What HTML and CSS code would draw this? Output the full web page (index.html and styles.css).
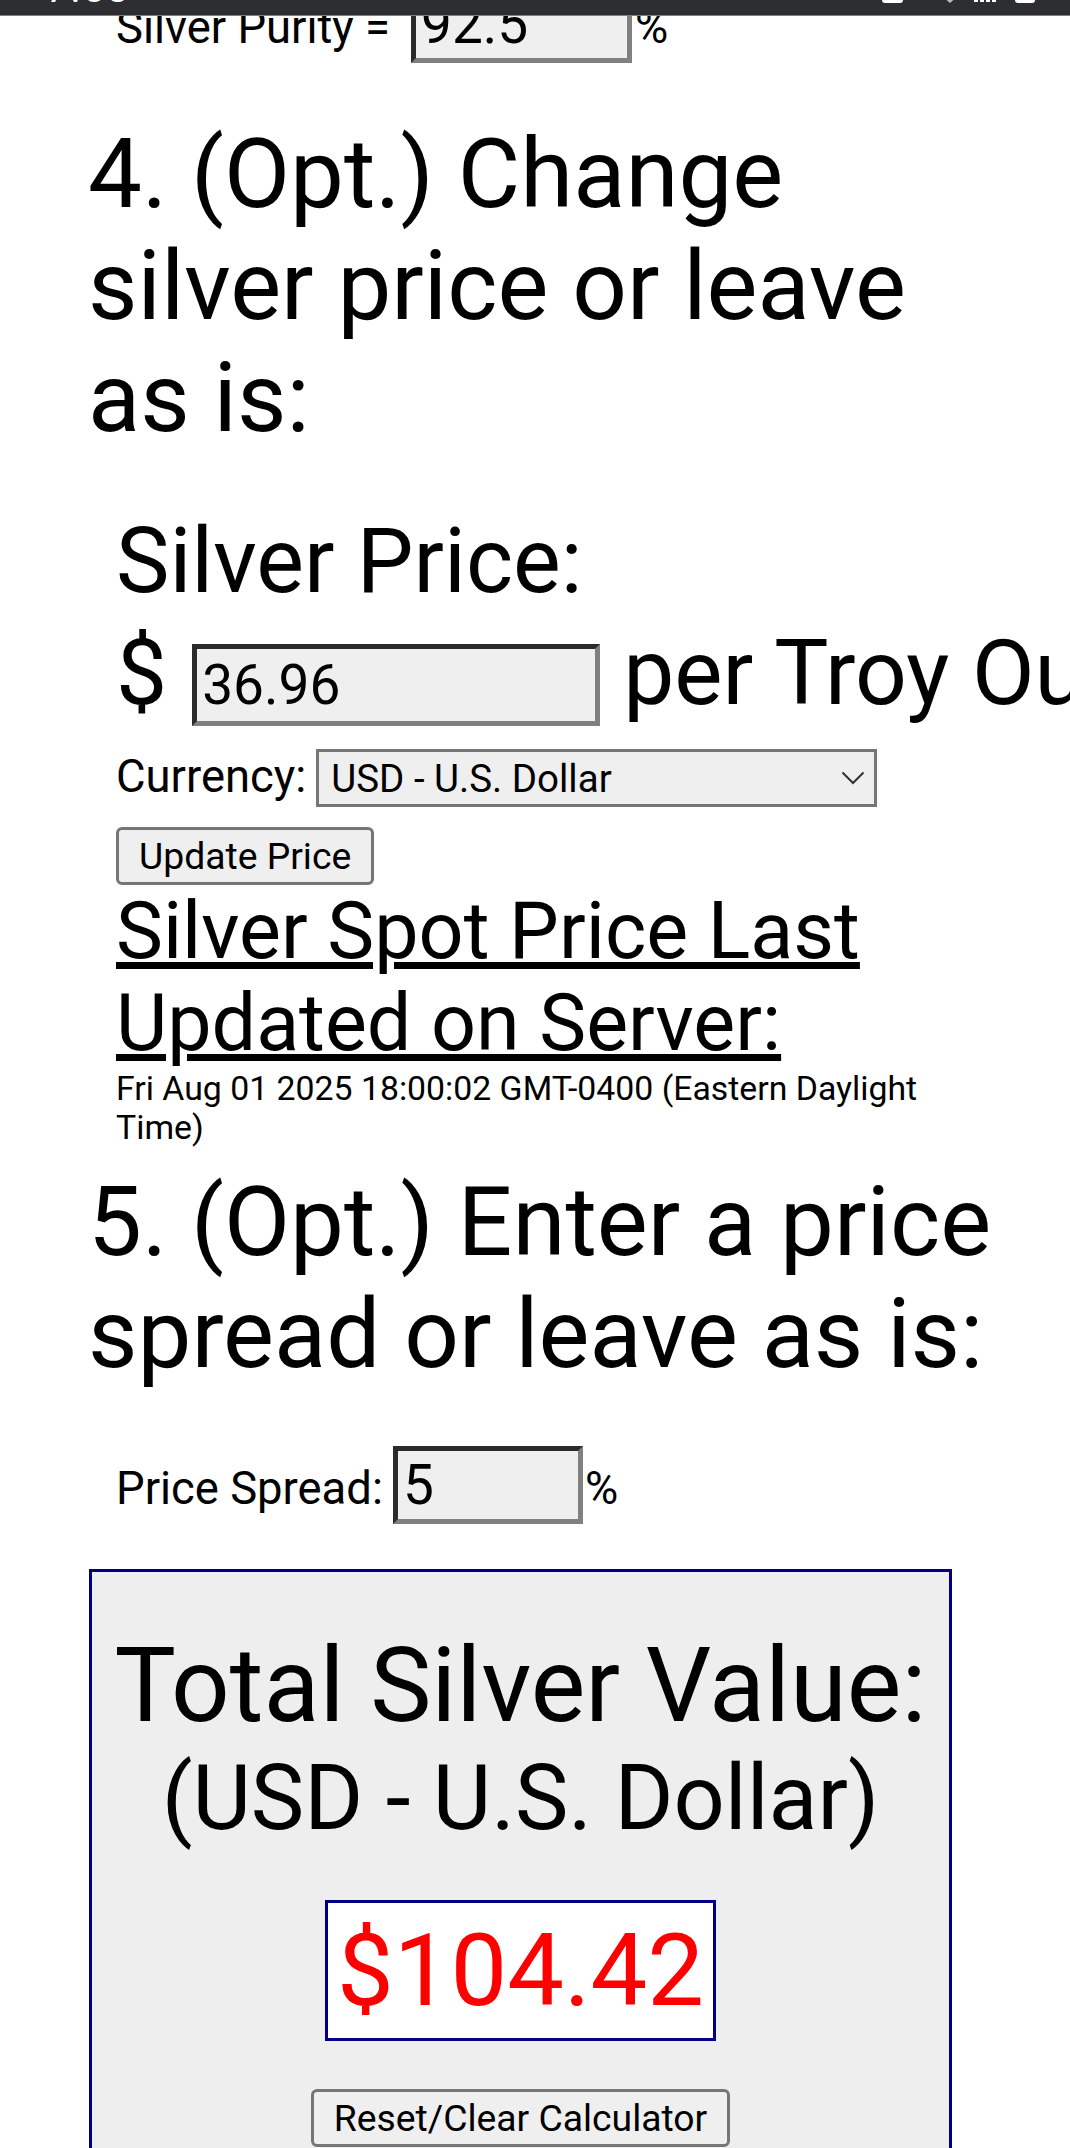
FILE: index.html
```html
<!DOCTYPE html>
<html lang="en">
<head>
<meta charset="utf-8">
<title>Silver Calculator</title>
<link rel="stylesheet" href="styles.css">
</head>
<body>
<div class="statusbar" aria-hidden="true">
  <span class="clock">7:53</span>
  <svg class="sb-icons" width="1070" height="15" viewBox="0 0 1070 15">
    <rect x="882" y="-6" width="21" height="9" rx="3" fill="#fff"/>
    <polygon points="942,-4 958,-4 950,3" fill="#bbb"/>
    <rect x="974" y="-4" width="4" height="6" fill="#fff"/>
    <rect x="980" y="-4" width="4" height="6" fill="#fff"/>
    <rect x="986" y="-4" width="4" height="6" fill="#fff"/>
    <rect x="992" y="-4" width="4" height="6" fill="#fff"/>
    <rect x="1015" y="-6" width="20" height="9" rx="3" fill="#fff"/>
  </svg>
</div>
<main class="page">
  <div class="field-row purity indent">
    <label class="lbl" for="purity">Silver Purity =</label>
    <input id="purity" class="num-input purity-input" type="text" value="92.5">
    <span class="unit">%</span>
  </div>

  <h2 class="step step4">4. (Opt.) Change silver price or leave as is:</h2>

  <section class="indent price-sec">
    <div class="big-label">Silver Price:</div>
    <div class="price-row">
      <span class="cur-sign">$</span>
      <input class="num-input price-input" type="text" value="36.96">
      <span class="per">per Troy Ounce</span>
    </div>
    <div class="field-row currency-row">
      <label class="lbl" for="currency">Currency:</label>
      <div class="select-wrap">
        <select id="currency" class="cur-select">
          <option>USD - U.S. Dollar</option>
        </select>
        <svg class="chev" width="24" height="14" viewBox="0 0 24 14" aria-hidden="true">
          <polyline points="1.5,1.5 12,12 22.5,1.5" fill="none" stroke="#333" stroke-width="2"/>
        </svg>
      </div>
    </div>
    <button class="btn update-btn" type="button">Update Price</button>
    <h3 class="spot-title">Silver Spot Price Last Updated on Server:</h3>
    <div class="spot-date">Fri Aug 01 2025 18:00:02 GMT-0400 (Eastern Daylight Time)</div>
  </section>

  <h2 class="step step5">5. (Opt.) Enter a price spread or leave as is:</h2>

  <div class="field-row spread indent">
    <label class="lbl" for="spread">Price Spread:</label>
    <input id="spread" class="num-input spread-input" type="text" value="5">
    <span class="unit spread-unit">%</span>
  </div>

  <section class="total">
    <div class="total-title">Total Silver Value:</div>
    <div class="total-cur">(USD - U.S. Dollar)</div>
    <div class="result">$104.42</div>
    <button class="btn reset-btn" type="button">Reset/Clear Calculator</button>
  </section>
</main>
</body>
</html>
```

FILE: styles.css
```css
html {
  overflow: hidden;
}

body {
  margin: 0;
  background: #ffffff;
  color: #000000;
  font-family: Roboto, "Liberation Sans", sans-serif;
}

/* phone status bar overlaying the scrolled page */
.statusbar {
  position: fixed;
  top: 0;
  left: 0;
  width: 1070px;
  height: 15px;
  background: #2d2e32;
  border-bottom: 1px solid #7d7e82;
  overflow: hidden;
  z-index: 10;
}

.clock {
  position: absolute;
  left: 46px;
  top: -31px;
  font-size: 40px;
  line-height: 1;
  color: #ffffff;
  letter-spacing: 2px;
}

.sb-icons {
  position: absolute;
  left: 0;
  top: 0;
}

.page {
  width: 922px;
  padding: 0 60px 0 88px;
}

.indent {
  margin-left: 28px;
  width: 836px;
}

.field-row {
  display: flex;
  align-items: baseline;
  font-size: 45.4px;
  white-space: nowrap;
}

.field-row > * {
  flex: none;
}

.lbl {
  font-size: 45.4px;
}

.num-input {
  box-sizing: border-box;
  margin: 0;
  padding: 0 5px;
  border-style: solid;
  border-width: 5px;
  border-color: #2b2b2b #808080 #808080 #2b2b2b;
  background: #efefef;
  color: #000000;
  font-family: Roboto, "Liberation Sans", sans-serif;
  font-size: 55px;
  line-height: normal;
  outline: none;
}

.purity {
  margin-top: -15px;
}

.purity-input {
  width: 221px;
  height: 78px;
  margin-left: 21px;
}

.unit {
  margin-left: 3px;
}

.step {
  margin: 55px 0 0;
  font-size: 96px;
  font-weight: normal;
  line-height: normal;
}

.price-sec {
  margin-top: 55px;
}

.big-label {
  font-size: 90px;
  line-height: normal;
}

.price-row {
  display: flex;
  align-items: baseline;
  margin-top: 6px;
  font-size: 91px;
  white-space: nowrap;
}

.price-row > * {
  flex: none;
}

.price-input {
  width: 408px;
  height: 82px;
  margin-left: 25px;
}

.per {
  margin-left: 23px;
}

.currency-row {
  margin-top: 23px;
}

.select-wrap {
  position: relative;
  margin-left: 10px;
}

.cur-select {
  appearance: none;
  -webkit-appearance: none;
  box-sizing: border-box;
  display: block;
  width: 561px;
  height: 58px;
  margin: 0;
  padding: 0 0 0 12px;
  border: 3px solid #767676;
  border-radius: 0;
  background: #efefef;
  color: #000000;
  font-family: Roboto, "Liberation Sans", sans-serif;
  font-size: 38.5px;
}

.chev {
  position: absolute;
  right: 12px;
  top: 22px;
  pointer-events: none;
}

.btn {
  box-sizing: border-box;
  margin: 0;
  padding: 4px 20px;
  border: 3px solid #767676;
  border-radius: 6px;
  background: #efefef;
  color: #000000;
  font-family: Roboto, "Liberation Sans", sans-serif;
  font-size: 37.3px;
  line-height: normal;
}

.update-btn {
  display: block;
  margin-top: 20px;
}

.spot-title {
  margin: 0;
  font-size: 79px;
  font-weight: normal;
  line-height: 92px;
  text-decoration: underline;
  text-decoration-thickness: 7px;
  text-underline-offset: 4px;
}

.spot-date {
  font-size: 33.8px;
  line-height: 39px;
}

.step5 {
  margin-top: 19px;
}

.spread {
  margin-top: 56px;
}

.spread-input {
  width: 190px;
  height: 78px;
  margin-left: 10px;
}

.spread-unit {
  margin-left: 2px;
}

.total {
  box-sizing: border-box;
  width: 863px;
  height: 640px;
  margin: 45px 0 0 1px;
  padding-top: 53px;
  border: 3px solid #000080;
  background: #eeeeee;
  text-align: center;
}

.total-title {
  font-size: 103px;
  line-height: normal;
}

.total-cur {
  font-size: 90px;
  line-height: normal;
}

.result {
  width: fit-content;
  margin: 49px auto 0;
  padding: 8px 9px;
  border: 3px solid #000080;
  background: #ffffff;
  color: #ff0000;
  font-size: 101px;
  line-height: normal;
}

.reset-btn {
  display: block;
  margin: 48px auto 0;
}
```
